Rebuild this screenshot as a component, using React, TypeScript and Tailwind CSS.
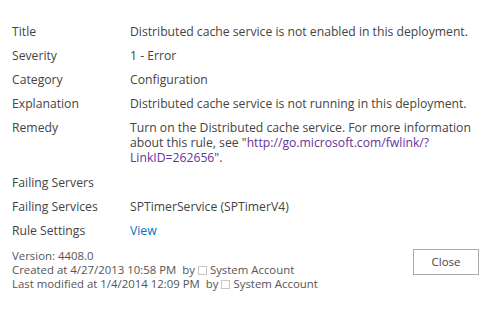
import React from "react";

const rows: { label: string; value?: React.ReactNode }[] = [
  { label: "Title", value: "Distributed cache service is not enabled in this deployment." },
  { label: "Severity", value: "1 - Error" },
  { label: "Category", value: "Configuration" },
  { label: "Explanation", value: "Distributed cache service is not running in this deployment." },
  {
    label: "Remedy",
    value: (
      <>
        Turn on the Distributed cache service. For more information about this rule, see "
        <span className="text-[#663399]">
          http://go.microsoft.com/fwlink/?<wbr />LinkID=262656
        </span>
        ".
      </>
    ),
  },
  { label: "Failing Servers" },
  { label: "Failing Services", value: "SPTimerService (SPTimerV4)" },
  { label: "Rule Settings", value: <span className="text-[#0072c6]">View</span> },
];

function Box() {
  return <span className="inline-block w-[9px] h-[9px] border border-[#c6c6c6] align-[-1px] mx-[3px]" />;
}

export default function App() {
  return (
    <div
      className="w-[497px] h-[325px] bg-white text-[#444444] overflow-hidden"
      style={{ fontFamily: '"Open Sans", "Noto Sans", sans-serif' }}
    >
      <div className="pt-[19px] pl-[12px] pr-[17px]">
        {rows.map((r) => (
          <div key={r.label} className="flex py-[4.6px] text-[12.2px] leading-[15px]">
            <div className="w-[118px] shrink-0">{r.label}</div>
            <div className="flex-1 min-w-0 break-words">{r.value}</div>
          </div>
        ))}
        <div className="flex justify-between items-start mt-[6px]">
          <div className="text-[11.4px] leading-[14px] text-[#555555]">
            <div>Version: 4408.0</div>
            <div>
              Created at 4/27/2013 10:58 PM&nbsp; by<Box />System Account
            </div>
            <div>
              Last modified at 1/4/2014 12:09 PM&nbsp; by<Box />System Account
            </div>
          </div>
          <button className="w-[66px] h-[26px] border border-[#ababab] bg-white text-[11.5px] text-[#444444] mr-[1px]">
            Close
          </button>
        </div>
      </div>
    </div>
  );
}
